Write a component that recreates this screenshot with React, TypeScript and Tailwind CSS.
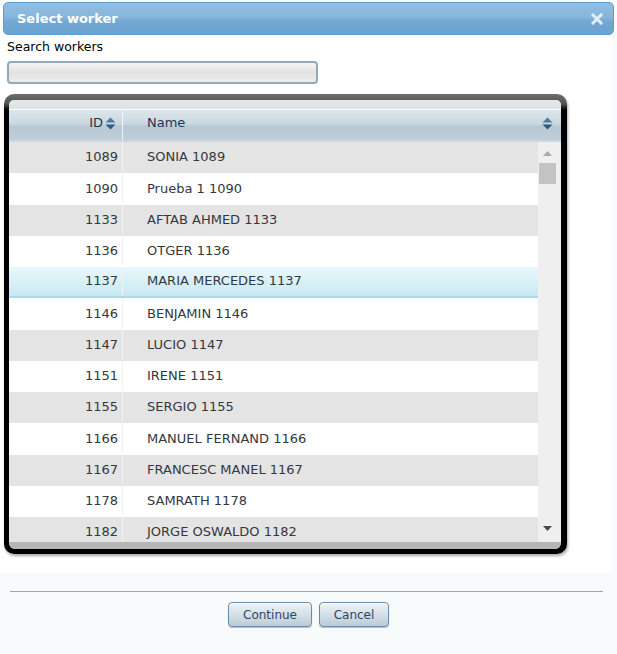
import React from 'react';

const workers = [
  { id: 1089, name: 'SONIA 1089' },
  { id: 1090, name: 'Prueba 1 1090' },
  { id: 1133, name: 'AFTAB AHMED 1133' },
  { id: 1136, name: 'OTGER 1136' },
  { id: 1137, name: 'MARIA MERCEDES 1137' },
  { id: 1146, name: 'BENJAMIN 1146' },
  { id: 1147, name: 'LUCIO 1147' },
  { id: 1151, name: 'IRENE 1151' },
  { id: 1155, name: 'SERGIO 1155' },
  { id: 1166, name: 'MANUEL FERNAND 1166' },
  { id: 1167, name: 'FRANCESC MANEL 1167' },
  { id: 1178, name: 'SAMRATH 1178' },
  { id: 1182, name: 'JORGE OSWALDO 1182' },
];

const selectedId = 1137;

// Up/down sort arrows used in the grid header
const SortIcon = () => (
  <svg width="11" height="13" viewBox="0 0 11 13">
    <path d="M5.5 0.5 L10.5 5.5 L0.5 5.5 Z" fill="#4f7aa3" />
    <path d="M0.5 7.5 L10.5 7.5 L5.5 12.5 Z" fill="#2f5a82" />
  </svg>
);

const DialogButton: React.FC<{ label: string; width: string }> = ({ label, width }) => (
  <button
    className={`${width} h-[25px] rounded-[4px] border border-[#6d8ba4] bg-[linear-gradient(#eef3f6,#d5e0e7_50%,#bccbd6)] shadow-[inset_0_1px_0_#ffffff,0_1px_1px_rgba(0,0,0,0.25)] text-[12px] text-[#2a4864]`}
  >
    {label}
  </button>
);

export default function App() {
  return (
    <div
      className="w-[617px] h-[654px] bg-[#f8fbfc] overflow-hidden"
      style={{ fontFamily: '"DejaVu Sans", Verdana, sans-serif' }}
    >
      <div className="w-[612px] bg-white pt-[2px] pb-[19px]">
        {/* Title bar */}
        <div className="ml-[3px] w-[611px] h-[33px] rounded-[5px] border border-[#5f9bcd] bg-[linear-gradient(#92bfe2,#86b6dc_45%,#72a8d4_60%,#6aa2d0)] flex items-center justify-between pl-[13px] pr-[10px]">
          <span className="text-white font-bold text-[13px]">Select worker</span>
          <svg width="12" height="12" viewBox="0 0 12 12">
            <path d="M2 2 L10 10 M10 2 L2 10" stroke="#e3eef7" strokeWidth="3" strokeLinecap="square" />
          </svg>
        </div>

        {/* Search */}
        <div className="px-[7px] mt-[4px] text-[12.5px] leading-[16px] text-black">Search workers</div>
        <div className="ml-[7px] mt-[6px] w-[311px] h-[23px] rounded-[4px] border-2 border-[#93a9bd] bg-[linear-gradient(#f4f4f4,#e2e2e2_50%,#ededed)]" />

        {/* Grid frame */}
        <div className="ml-[4px] mt-[10px] w-[563px] h-[460px] rounded-[10px] bg-[linear-gradient(#6e6e6e,#505050_10px,#000000_16px)] pt-[6px] pl-[5px] pr-[6px] pb-[5px] shadow-[1px_2px_3px_rgba(0,0,0,0.35)]">
          <div className="h-full rounded-t-[5px] rounded-b-[6px] overflow-hidden bg-[#b6b6b6] flex flex-col">
            <div className="h-[9px] bg-[linear-gradient(#e4e8eb,#dce2e6)]" />
            <div className="h-[1px] bg-white" />
            {/* Header */}
            <div className="h-[30px] flex items-stretch bg-[linear-gradient(#dce5eb,#cbd8e0_45%,#b7c9d4_55%,#bfcfd9)] text-[13px] text-[#1e3550]">
              <div className="w-[113px] flex items-center justify-end gap-[2px] pr-[6px] pb-[4px]">
                <span>ID</span>
                <SortIcon />
              </div>
              <div className="w-[1px] bg-[#eef3f6]" />
              <div className="flex-1 flex items-center justify-between pl-[24px] pr-[8px] pb-[4px]">
                <span>Name</span>
                <SortIcon />
              </div>
            </div>
            <div className="h-[2px] bg-[#cdd9e1]" />

            {/* Body */}
            <div className="h-[400px] flex">
              <div className="w-[529px] overflow-hidden">
                {workers.map((w, i) => {
                  const selected = w.id === selectedId;
                  const bg = selected
                    ? 'bg-[linear-gradient(#e9f7fc,#d6eff6_60%,#c8e8f1)] border-b-2 border-[#a8dbe8]'
                    : i % 2 === 0
                    ? 'bg-[#e4e4e4]'
                    : 'bg-white';
                  return (
                    <div key={w.id} className={`h-[31.25px] flex items-center pb-[1px] text-[13px] text-[#333840] ${bg}`}>
                      <div className="w-[113px] text-right pr-[4px]">{w.id}</div>
                      <div className="w-[1px] self-stretch bg-[#f2f2f2]" />
                      <div className="pl-[24px] whitespace-nowrap">{w.name}</div>
                    </div>
                  );
                })}
              </div>
              {/* Scrollbar */}
              <div className="w-[23px] bg-[#efefef] flex flex-col items-center pr-[4px]">
                <svg width="9" height="6" viewBox="0 0 9 6" className="mt-[9px]">
                  <path d="M4.5 0 L9 5 L0 5 Z" fill="#a9a9a9" />
                </svg>
                <div className="mt-[6px] w-[17px] h-[21px] bg-[#c3c3c3]" />
                <div className="flex-1" />
                <svg width="9" height="6" viewBox="0 0 9 6" className="mb-[10px]">
                  <path d="M0 0 L9 0 L4.5 5 Z" fill="#4a4a4a" />
                </svg>
              </div>
            </div>
            <div className="flex-1 bg-[#b6b6b6]" />
          </div>
        </div>
      </div>

      {/* Footer */}
      <div className="pt-[18px]">
        <div className="ml-[10px] w-[593px] h-[1px] bg-[#a3a3a3]" />
        <div className="mt-[10px] flex justify-center gap-[7px]">
          <DialogButton label="Continue" width="w-[84px]" />
          <DialogButton label="Cancel" width="w-[70px]" />
        </div>
      </div>
    </div>
  );
}
